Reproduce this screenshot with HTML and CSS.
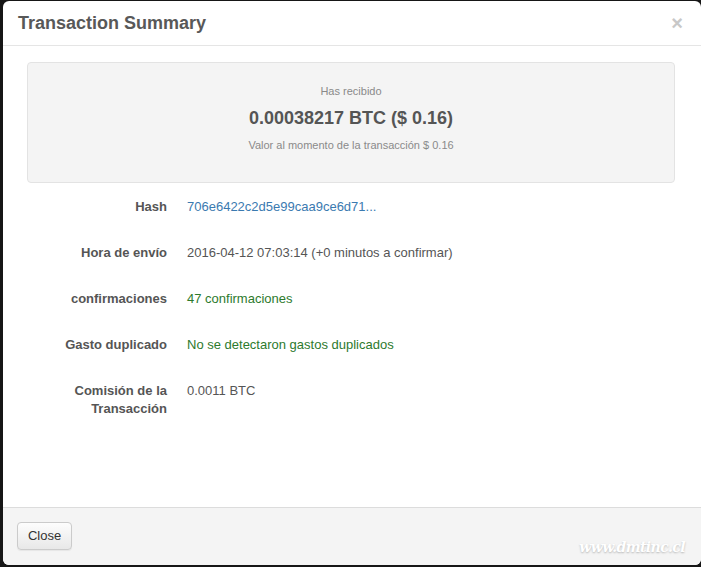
FILE: index.html
```html
<!DOCTYPE html>
<html lang="es">
<head>
<meta charset="utf-8">
<title>Transaction Summary</title>
<link rel="stylesheet" href="styles.css">
</head>
<body>
<div class="modal">
  <div class="modal-header">
    <h3 class="modal-title">Transaction Summary</h3>
    <span class="close">&times;</span>
  </div>
  <div class="modal-body">
    <div class="well">
      <div class="well-label">Has recibido</div>
      <div class="well-amount">0.00038217 BTC ($ 0.16)</div>
      <div class="well-note">Valor al momento de la transacción $ 0.16</div>
    </div>
    <dl class="details">
      <dt>Hash</dt>
      <dd><a class="hash" href="#">706e6422c2d5e99caa9ce6d71...</a></dd>
      <dt>Hora de envío</dt>
      <dd>2016-04-12 07:03:14 (+0 minutos a confirmar)</dd>
      <dt>confirmaciones</dt>
      <dd class="ok">47 confirmaciones</dd>
      <dt>Gasto duplicado</dt>
      <dd class="ok">No se detectaron gastos duplicados</dd>
      <dt>Comisión de la Transacción</dt>
      <dd>0.0011 BTC</dd>
    </dl>
  </div>
  <div class="modal-footer">
    <button class="btn">Close</button>
    <span class="watermark">www.dmtinc.cl</span>
  </div>
</div>
</body>
</html>
```

FILE: styles.css
```css
html, body {
  margin: 0;
  padding: 0;
  height: 100%;
}
body {
  background: #161616;
  font-family: "Liberation Sans", Arial, sans-serif;
  color: #555;
  overflow: hidden;
}
.modal {
  margin: 1px 0 0 3px;
  width: 698px;
  height: 564px;
  background: #fff;
  border-radius: 6px;
  display: flex;
  flex-direction: column;
  overflow: hidden;
}
.modal-header {
  height: 45px;
  border-bottom: 1px solid #e5e5e5;
  display: flex;
  align-items: center;
  justify-content: space-between;
  padding: 0 15px;
  box-sizing: border-box;
  flex: none;
}
.modal-title {
  margin: 0;
  font-size: 18px;
  font-weight: bold;
  color: #585858;
  line-height: 20px;
  padding-top: 0;
}
.close {
  font-size: 20px;
  font-weight: bold;
  color: #c8c8c8;
  line-height: 20px;
  margin-right: 3px;
  margin-top: 0;
}
.modal-body {
  flex: 1;
  padding: 16px 26px 0 24px;
}
.well {
  height: 121px;
  box-sizing: border-box;
  background: #f4f4f4;
  border: 1px solid #e3e3e3;
  border-radius: 4px;
  text-align: center;
  padding-top: 21px;
}
.well-label {
  font-size: 11px;
  line-height: 14px;
  color: #8a8a8a;
}
.well-amount {
  font-size: 18px;
  font-weight: bold;
  line-height: 22px;
  color: #555;
  margin-top: 9px;
}
.well-note {
  font-size: 11px;
  line-height: 14px;
  color: #8a8a8a;
  margin-top: 9px;
}
.details {
  display: grid;
  grid-template-columns: 140px 1fr;
  column-gap: 20px;
  row-gap: 28px;
  margin: 15px 0 0 0;
  font-size: 13px;
  line-height: 18px;
}
.details dt {
  text-align: right;
  font-weight: bold;
  color: #555;
}
.details dd {
  margin: 0;
  color: #555;
}
.hash {
  color: #3b7ab0;
  text-decoration: none;
}
.details dd.ok {
  color: #2d7a2d;
}
.modal-footer {
  flex: none;
  height: 58px;
  box-sizing: border-box;
  border-top: 1px solid #dcdcdc;
  background: #f4f4f4;
  padding: 14px 14px 0 14px;
  display: flex;
  align-items: flex-start;
  justify-content: space-between;
}
.btn {
  height: 28px;
  width: 55px;
  font-family: "Liberation Sans", Arial, sans-serif;
  font-size: 13px;
  color: #333;
  background: linear-gradient(#fdfdfd, #e8e8e8);
  border: 1px solid #cbcbcb;
  border-radius: 4px;
  padding: 0 0 2px 0;
  box-shadow: 0 1px 1px rgba(0,0,0,0.06);
}
.watermark {
  font-family: "DejaVu Serif", serif;
  font-style: italic;
  font-weight: bold;
  font-size: 14px;
  color: #fff;
  text-shadow: 0 1px 2px rgba(0,0,0,0.25);
  margin-top: 17px;
  margin-right: 2px;
  letter-spacing: -0.6px;
}
```
